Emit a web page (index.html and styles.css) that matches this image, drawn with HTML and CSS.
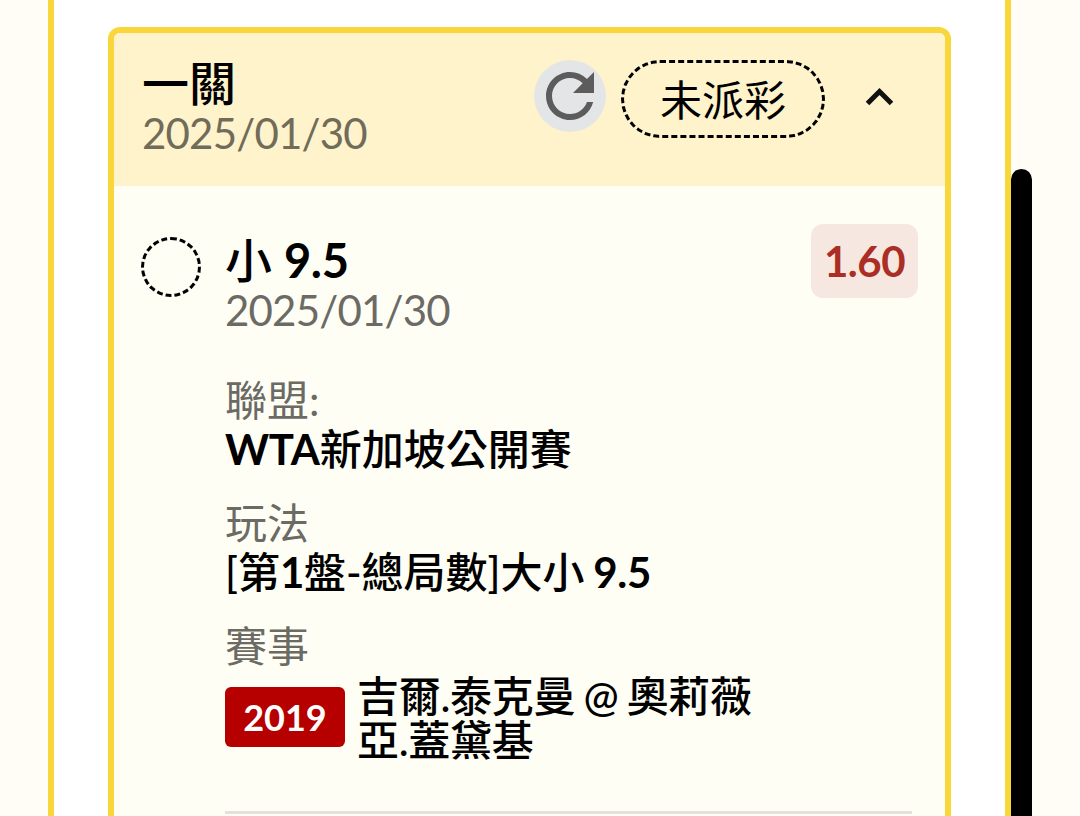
FILE: index.html
```
<!DOCTYPE html>
<html lang="zh-Hant">
<head>
    <meta charset="UTF-8">
    <meta name="viewport" content="width=device-width, initial-scale=1.0">
    <title>未派彩</title>
    <link rel="stylesheet" href="styles.css">
</head>
<body>
    <div class="panel">
        <div class="bet-card">
            <div class="bet-header">
                <div class="bet-heading">
                    <div class="title">一關</div>
                    <div class="date">2025/01/30</div>
                </div>
                <div class="bet-actions">
                    <button class="btn-refresh" aria-label="重新整理">
                        <svg width="72" height="72" viewBox="0 0 24 24">
                            <path d="M17.65 6.35A7.96 7.96 0 0 0 12 4c-4.42 0-7.99 3.58-7.99 8s3.57 8 7.99 8c3.73 0 6.84-2.55 7.73-6h-2.08A5.99 5.99 0 0 1 12 18c-3.31 0-6-2.69-6-6s2.69-6 6-6c1.66 0 3.14.69 4.22 1.78L13 11h7V4z" fill="#5c5c5c"/>
                        </svg>
                    </button>
                    <div class="status">未派彩</div>
                    <button class="btn-toggle" aria-label="收合">
                        <svg width="30" height="22" viewBox="0 0 30 22">
                            <path d="M2.5 17.5L14.5 5.5L26.5 17.5" fill="none" stroke="#111" stroke-width="5"/>
                        </svg>
                    </button>
                </div>
            </div>

            <div class="bet-body">
                <div class="result-circle"></div>
                <div class="bet-content">
                    <div class="pick">
                        <div>
                            <div class="title">小 <b>9.5</b></div>
                            <div class="date">2025/01/30</div>
                        </div>
                        <div class="odds">1.60</div>
                    </div>

                    <div class="info">
                        <div class="label">聯盟:</div>
                        <div class="value"><b>WTA</b>新加坡公開賽</div>
                    </div>
                    <div class="info">
                        <div class="label">玩法</div>
                        <div class="value">[第<b>1</b>盤-總局數]大小 <b>9.5</b></div>
                    </div>
                    <div class="info">
                        <div class="label">賽事</div>
                        <div class="match">
                            <span class="match-no">2019</span>
                            <div class="teams">吉爾.泰克曼 @ 奧莉薇亞.蓋黛基</div>
                        </div>
                    </div>
                    <div class="divider"></div>
                </div>
            </div>
        </div>
    </div>
    <div class="scrollbar"></div>
</body>
</html>
```
FILE: styles.css
```
:root {
    --yellow: #f9d73b;
    --cream: #fffef5;
    --gray: #6b6a64;
}

* {
    box-sizing: border-box;
}

body {
    font-family: Lato, "Noto Sans CJK TC", sans-serif;
    font-size: 42px;
    margin: 0;
    height: 816px;
    overflow: hidden;
    background-color: #fffdf6;
    color: #000;
}

button {
    padding: 0;
    border: none;
    background: none;
    cursor: pointer;
}

svg {
    display: block;
}

.panel {
    width: 963px;
    height: 816px;
    margin-left: 48px;
    padding: 27px 54px 0;
    border: solid var(--yellow);
    border-width: 0 6px;
    background: #fff;
    overflow: hidden;
}

.bet-card {
    width: 843px;
    height: 900px;
    border: 6px solid var(--yellow);
    border-radius: 12px;
    background: var(--cream);
    overflow: hidden;
}

.bet-header {
    display: flex;
    justify-content: space-between;
    height: 153px;
    padding: 27px 50px 0 28px;
    background: #fff3cc;
}

.bet-heading {
    margin-top: -2px;
}

.title {
    font-size: 47px;
    line-height: 50px;
    font-weight: 500;
    white-space: nowrap;
}

.title b,
.value b {
    font-weight: 700;
    letter-spacing: -0.3px;
}

.date {
    line-height: 50px;
    letter-spacing: -0.8px;
    color: var(--gray);
}

.bet-header .date {
    color: #716b5a;
}

.bet-actions {
    display: flex;
    align-items: flex-start;
}

.btn-refresh {
    width: 72px;
    height: 72px;
    margin-right: 15px;
    border-radius: 50%;
    background: #e4e5e7;
}

.status {
    width: 204px;
    height: 78px;
    border: 3px dashed #000;
    border-radius: 39px;
    line-height: 75px;
    text-align: center;
}

.btn-toggle {
    margin: 26px 0 0 40px;
}

.bet-body {
    display: flex;
    gap: 24px;
    padding: 38px 27px 0;
}

.result-circle {
    width: 60px;
    height: 60px;
    margin-top: 13px;
    border: 3px dashed #000;
    border-radius: 50%;
    flex-shrink: 0;
}

.bet-content {
    flex: 1;
}

.pick {
    display: flex;
    justify-content: space-between;
    height: 152px;
    padding-top: 11px;
}

.odds {
    width: 107px;
    height: 74px;
    margin-top: -11px;
    border-radius: 12px;
    background: #f7e7e1;
    color: #ab2e24;
    font-weight: 700;
    letter-spacing: -0.5px;
    line-height: 75px;
    text-align: center;
}

.info {
    height: 123px;
}

.label,
.value {
    line-height: 49px;
    white-space: nowrap;
}

.label {
    color: var(--gray);
}

.value,
.teams {
    font-weight: 500;
    word-spacing: -2px;
}

.match {
    display: flex;
    align-items: center;
    gap: 12px;
    margin-top: 3px;
}

.match-no {
    width: 120px;
    height: 60px;
    margin-bottom: 2px;
    border-radius: 6px;
    background: #b60000;
    color: #fff;
    font-size: 36px;
    font-weight: 700;
    line-height: 61px;
    text-align: center;
}

.teams {
    width: 420px;
    line-height: 44px;
    letter-spacing: -0.3px;
}

.divider {
    width: 687px;
    height: 3px;
    margin-top: 66px;
    background: #e5e0da;
}

.scrollbar {
    position: absolute;
    top: 169px;
    left: 1011px;
    width: 21px;
    height: 647px;
    border-radius: 11px 11px 0 0;
    background: #000;
}
```
